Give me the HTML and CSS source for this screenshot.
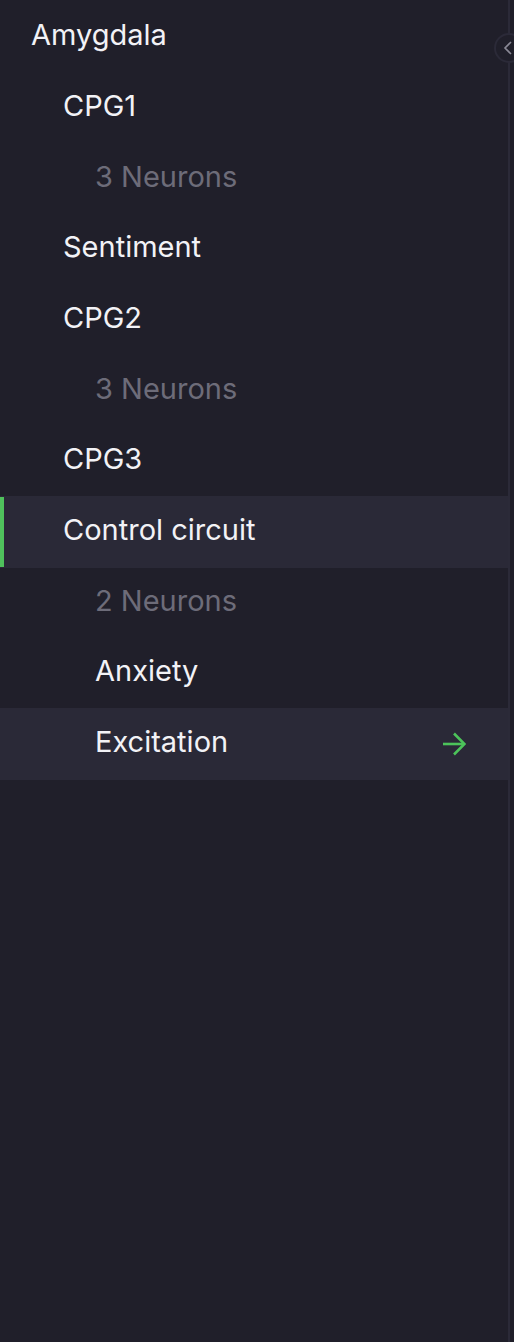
FILE: index.html
```html
<!DOCTYPE html>
<html>
<head>
<meta charset="utf-8">
<link rel="stylesheet" href="styles.css">
</head>
<body>
<div class="app">
  <nav class="sidebar">
    <ul class="tree">
      <li class="row lvl0"><span class="label">Amygdala</span></li>
      <li class="row lvl1"><span class="label">CPG1</span></li>
      <li class="row lvl2 muted"><span class="label">3 Neurons</span></li>
      <li class="row lvl1"><span class="label">Sentiment</span></li>
      <li class="row lvl1"><span class="label">CPG2</span></li>
      <li class="row lvl2 muted"><span class="label">3 Neurons</span></li>
      <li class="row lvl1"><span class="label">CPG3</span></li>
      <li class="row lvl1 active"><span class="label">Control circuit</span></li>
      <li class="row lvl2 muted"><span class="label">2 Neurons</span></li>
      <li class="row lvl2"><span class="label">Anxiety</span></li>
      <li class="row lvl2 hover"><span class="label">Excitation</span>
        <svg class="go" width="24" height="24" viewBox="0 0 24 24" fill="none" stroke="#4cc35a" stroke-width="2.6" stroke-linecap="butt" stroke-linejoin="miter"><path d="M1 12 H22"/><path d="M12 1.5 L22.5 12 L12 22.5"/></svg>
      </li>
    </ul>
    <button class="collapse" aria-label="Collapse">
      <svg width="12" height="14" viewBox="0 0 12 14" fill="none" stroke="#8a8996" stroke-width="1.6"><path d="M8 1 L2 7 L8 13"/></svg>
    </button>
  </nav>
  <div class="main"></div>
</div>
</body>
</html>
```
FILE: styles.css
```css
html, body {
  margin: 0;
  padding: 0;
  background: #201f2a;
}
body {
  font-family: Inter, "Open Sans", sans-serif;
  color: #f2f2f6;
}
.app {
  display: flex;
  height: 1342px;
}
.sidebar {
  position: relative;
  width: 508px;
  border-right: 2px solid #2b2a38;
  background: #201f2a;
}
.main {
  flex: 1;
  background: #1f1e29;
}
.tree {
  list-style: none;
  margin: 0;
  padding: 2px 0 0 0;
}
.row {
  height: 70.667px;
  display: flex;
  align-items: center;
  padding-bottom: 5px;
  box-sizing: border-box;
  font-size: 29px;
  letter-spacing: 0;
}
.lvl0 { padding-left: 31px; }
.lvl1 { padding-left: 63px; }
.lvl2 { padding-left: 95px; }
.muted { color: #6d6c79; }
.active, .hover {
  background: #2a2937;
  box-shadow: 0 1px 0 #2a2937, 0 -1px 0 #2a2937;
}
.active {
  border-left: 4px solid #4fc15c;
  padding-left: 59px;
}
.hover {
  justify-content: space-between;
  padding-right: 42px;
}
.go {
  margin-top: 5px;
}
.collapse {
  position: absolute;
  top: 33px;
  right: -16px;
  width: 30px;
  height: 30px;
  border-radius: 50%;
  border: 2px solid #2b2a38;
  background: #201f2a;
  padding: 0;
  display: flex;
  align-items: center;
  justify-content: center;
}
```
